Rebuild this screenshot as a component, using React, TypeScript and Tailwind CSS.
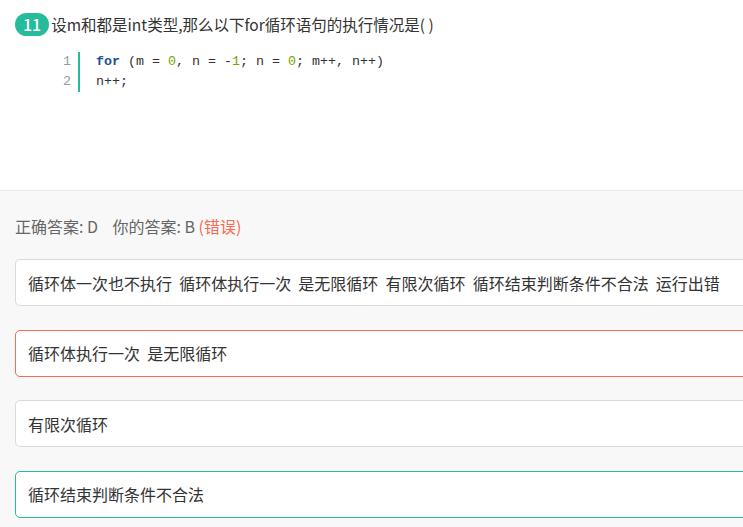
import React from "react";

const font = '"Noto Sans CJK SC", "Noto Sans", sans-serif';

function Option({ text, border }: { text: string; border: string }) {
  return (
    <div
      className={`h-[47px] w-[800px] rounded-[5px] border bg-white pl-[12px] flex items-center text-[16px] text-[#333] whitespace-pre ${border}`}
    >
      {text}
    </div>
  );
}

export default function App() {
  return (
    <div className="w-[743px] h-[527px] overflow-hidden bg-[#f8f8f8]" style={{ fontFamily: font }}>
      <div className="h-[191px] bg-white border-b border-[#e9e9e9] pt-[13px] pl-[15px]">
        <div className="flex items-center">
          <span className="h-[23px] px-[8px] rounded-full bg-[#25bb9b] text-white text-[16px] leading-[23px] font-medium">
            11
          </span>
          <span className="ml-[2px] text-[15.5px] leading-[23px] text-[#333]">
            设m和都是int类型,那么以下for循环语句的执行情况是( )
          </span>
        </div>
        <div
          className="mt-[16px] ml-[35px] flex text-[13.33px] leading-[20px]"
          style={{ fontFamily: '"Liberation Mono", "DejaVu Sans Mono", monospace' }}
        >
          <div className="w-[28px] pr-[7px] text-right text-[#999]">
            <div>1</div>
            <div>2</div>
          </div>
          <div className="border-l-2 border-[#25bb9b] pl-[16px] text-[#333] whitespace-pre">
            <div>
              <span className="font-bold text-[#1c4f9c]">for</span> (m = <span className="text-[#7aa300]">0</span>, n = -<span className="text-[#7aa300]">1</span>; n = <span className="text-[#7aa300]">0</span>; m++, n++)
            </div>
            <div>n++;</div>
          </div>
        </div>
      </div>
      <div className="pl-[15px] pt-[25px]">
        <div className="text-[16px] leading-[20px] text-[#666] whitespace-pre">
          正确答案: D{"    "}你的答案: B <span className="text-[#fa6a50]">(错误)</span>
        </div>
        <div className="mt-[23px] flex flex-col gap-[23.5px]">
          <Option
            text="循环体一次也不执行  循环体执行一次  是无限循环  有限次循环  循环结束判断条件不合法  运行出错"
            border="border-[#dadada]"
          />
          <Option text="循环体执行一次  是无限循环" border="border-[#fd6a4d]" />
          <Option text="有限次循环" border="border-[#dadada]" />
          <Option text="循环结束判断条件不合法" border="border-[#25bb9b]" />
        </div>
      </div>
    </div>
  );
}
